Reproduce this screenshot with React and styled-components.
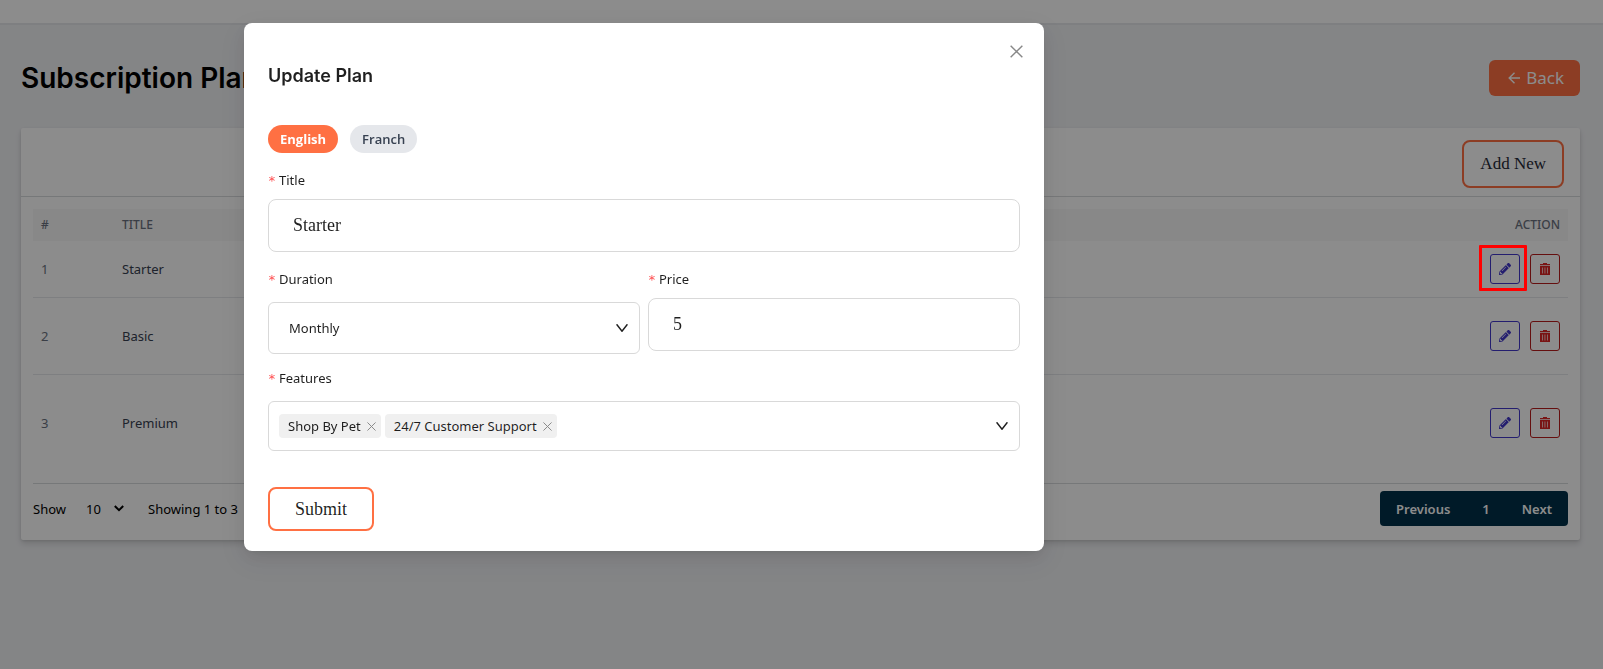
import { useState } from "react";
import { FaPencilAlt } from "react-icons/fa";
import styled, { createGlobalStyle } from "styled-components";

const sans = `"Noto Sans", "Open Sans", sans-serif`;
const serif = `"Liberation Serif", serif`;

const plans = [
    { id: 1, title: "Starter", height: 57, active: true },
    { id: 2, title: "Basic", height: 77 },
    { id: 3, title: "Premium", height: 96 },
];

function TrashIcon() {
    return (
        <svg width="12" height="14" viewBox="0 0 12 14" fill="currentColor" aria-hidden="true">
            <path d="M4 1h4v1h3v1H1V2h3z" />
            <path fillRule="evenodd" d="M1 3.8h10V13H1zM3.2 5.5v6h.7v-6zM5.6 5.5v6h.7v-6zM8 5.5v6h.7v-6z" />
        </svg>
    );
}

function ArrowIcon() {
    return (
        <svg width="12" height="12" viewBox="0 0 12 12" fill="none" stroke="currentColor" strokeWidth="1.4" aria-hidden="true">
            <path d="M6.5 .8 1.2 6l5.3 5.2M1.2 6H12" />
        </svg>
    );
}

function CrossIcon({ size, stroke = 1 }) {
    return (
        <svg width={size} height={size} viewBox="0 0 12 12" fill="none" stroke="currentColor" strokeWidth={stroke} aria-hidden="true">
            <path d="M.6 .6 11.4 11.4M11.4 .6 .6 11.4" />
        </svg>
    );
}

function ChevronIcon() {
    return (
        <svg width="12" height="8" viewBox="0 0 12 8" fill="none" stroke="currentColor" strokeWidth="1.5" aria-hidden="true">
            <path d="M.6 .3 6 7.2 11.4 .3" />
        </svg>
    );
}

export default function App() {
    const [language, setLanguage] = useState("English");
    const [features, setFeatures] = useState(["Shop By Pet", "24/7 Customer Support"]);

    return (
        <>
            <GlobalStyle />
            <Page>
                <TopBar />
                <Main>
                    <PageHeader>
                        <PageTitle>Subscription Plans</PageTitle>
                        <BackButton type="button"><ArrowIcon />Back</BackButton>
                    </PageHeader>
                    <Card>
                        <CardHeader>
                            <AddButton type="button">Add New</AddButton>
                        </CardHeader>
                        <CardBody>
                            <Table>
                                <thead>
                                    <tr>
                                        <HeadCell $index>#</HeadCell>
                                        <HeadCell>TITLE</HeadCell>
                                        <HeadCell $right>ACTION</HeadCell>
                                    </tr>
                                </thead>
                                <tbody>
                                    {plans.map((plan) => (
                                        <Row key={plan.id} $height={plan.height}>
                                            <Cell $muted>{plan.id}</Cell>
                                            <Cell>{plan.title}</Cell>
                                            <Cell>
                                                <Actions>
                                                    <ActionButton type="button" aria-label={`Edit ${plan.title}`} $border="#4338ca" $icon="#4338ca">
                                                        <FaPencilAlt size={12} />
                                                        {plan.active && <Highlight />}
                                                    </ActionButton>
                                                    <ActionButton type="button" aria-label={`Delete ${plan.title}`} $border="#b91c1c" $icon="#dc2626">
                                                        <TrashIcon />
                                                    </ActionButton>
                                                </Actions>
                                            </Cell>
                                        </Row>
                                    ))}
                                </tbody>
                            </Table>
                            <TableFooter>
                                <PageSize>
                                    <label htmlFor="page-size">Show</label>
                                    <SizeSelectWrap>
                                        <SizeSelect id="page-size" defaultValue="10">
                                            <option>10</option>
                                            <option>20</option>
                                        </SizeSelect>
                                        <svg width="10" height="7" viewBox="0 0 10 7" fill="none" stroke="currentColor" strokeWidth="2" aria-hidden="true">
                                            <path d="M.8 1 5 5.2 9.2 1" />
                                        </svg>
                                    </SizeSelectWrap>
                                    <span>Showing 1 to 3</span>
                                </PageSize>
                                <Pagination>
                                    <PageButton type="button">Previous</PageButton>
                                    <PageButton type="button">1</PageButton>
                                    <PageButton type="button">Next</PageButton>
                                </Pagination>
                            </TableFooter>
                        </CardBody>
                    </Card>
                </Main>
            </Page>

            <Overlay>
                <Modal role="dialog" aria-labelledby="modal-title">
                    <CloseButton type="button" aria-label="Close"><CrossIcon size={13} stroke={1.3} /></CloseButton>
                    <ModalTitle id="modal-title">Update Plan</ModalTitle>
                    <Tabs>
                        {["English", "Franch"].map((name) => (
                            <Tab key={name} type="button" $active={name === language} onClick={() => setLanguage(name)}>
                                {name}
                            </Tab>
                        ))}
                    </Tabs>
                    <Form onSubmit={(e) => e.preventDefault()}>
                        <Field>
                            <Label htmlFor="title">Title</Label>
                            <TextInput id="title" defaultValue="Starter" />
                        </Field>
                        <FieldRow>
                            <Field $loose>
                                <Label htmlFor="duration">Duration</Label>
                                <SelectBox>
                                    <Select id="duration" defaultValue="Monthly">
                                        <option>Monthly</option>
                                        <option>Yearly</option>
                                    </Select>
                                    <ChevronIcon />
                                </SelectBox>
                            </Field>
                            <Field>
                                <Label htmlFor="price">Price</Label>
                                <TextInput id="price" defaultValue="5" />
                            </Field>
                        </FieldRow>
                        <Field $loose>
                            <Label htmlFor="features">Features</Label>
                            <TagBox>
                                {features.map((name) => (
                                    <Tag key={name}>
                                        {name}
                                        <TagRemove
                                            type="button"
                                            aria-label={`Remove ${name}`}
                                            onClick={() => setFeatures(features.filter((el) => el !== name))}
                                        >
                                            <CrossIcon size={9} stroke={1.3} />
                                        </TagRemove>
                                    </Tag>
                                ))}
                                <TagInput id="features" />
                                <ChevronIcon />
                            </TagBox>
                        </Field>
                        <SubmitButton type="submit">Submit</SubmitButton>
                    </Form>
                </Modal>
            </Overlay>
        </>
    );
}

const GlobalStyle = createGlobalStyle`
    * {
        box-sizing: border-box;
    }
    body {
        margin: 0;
        font-family: ${sans};
        font-size: 13px;
        line-height: 20px;
        color: #000;
    }
    button, input, select {
        margin: 0;
        font: inherit;
        color: inherit;
    }
    button {
        cursor: pointer;
    }
`;

const Page = styled.div`
    min-height: 100vh;
    background: #f1f2f5;
`;

const TopBar = styled.header`
    height: 25px;
    background: #fff;
    border-bottom: 2px solid #e5e7eb;
`;

const Main = styled.main`
    padding: 35px 23px 0 21px;
`;

const PageHeader = styled.div`
    display: flex;
    align-items: center;
    justify-content: space-between;
    margin-bottom: 32px;
`;

const PageTitle = styled.h1`
    margin: 0;
    font: 600 28px/36px Inter, sans-serif;
`;

const BackButton = styled.button`
    display: flex;
    align-items: center;
    gap: 6px;
    height: 36px;
    padding: 0 16px 0 19px;
    border: 0;
    border-radius: 6px;
    background: #ff7043;
    color: #fff;
    font-size: 17px;
`;

const Card = styled.section`
    border-radius: 2px;
    background: #fff;
    box-shadow: 0 4px 6px rgba(0, 0, 0, 0.12), 0 1px 3px rgba(0, 0, 0, 0.1);
`;

const CardHeader = styled.div`
    display: flex;
    justify-content: flex-end;
    padding: 12px 16px 8px;
    border-bottom: 1px solid #d8dadd;
`;

const AddButton = styled.button`
    height: 48px;
    padding: 0 16px;
    border: 2px solid #ff7043;
    border-radius: 8px;
    background: none;
    color: #1f2937;
    font: 17px ${serif};
`;

const CardBody = styled.div`
    padding: 12px 12px 14px;
`;

const Table = styled.table`
    width: 100%;
    border-spacing: 0;
`;

const HeadCell = styled.th`
    width: ${(props) => (props.$index ? "81px" : "auto")};
    height: 32px;
    padding: 0 8px;
    background: #f7f7f7;
    color: #6b7280;
    font-size: 12px;
    font-weight: 500;
    text-align: ${(props) => (props.$right ? "right" : "left")};
`;

const Row = styled.tr`
    height: ${(props) => props.$height}px;
`;

const Cell = styled.td`
    padding: 0 8px;
    border-bottom: 1px solid #e5e7eb;
    color: ${(props) => (props.$muted ? "#6b7280" : "#374151")};

    tr:last-child > & {
        border-bottom: 0;
    }
`;

const Actions = styled.div`
    display: flex;
    justify-content: flex-end;
    gap: 10px;
`;

const ActionButton = styled.button`
    position: relative;
    display: grid;
    place-items: center;
    width: 30px;
    height: 30px;
    padding: 0;
    border: 1px solid ${(props) => props.$border};
    border-radius: 3px;
    background: none;
    color: ${(props) => props.$icon};
`;

const Highlight = styled.span`
    position: absolute;
    inset: -10px -8px -8px -12px;
    z-index: 20;
    border: 3px solid #f00;
    border-radius: 1px;
`;

const TableFooter = styled.div`
    display: flex;
    align-items: center;
    justify-content: space-between;
    margin-top: 12px;
    padding-top: 7px;
    border-top: 1px solid #d8dadd;
`;

const PageSize = styled.div`
    display: flex;
    align-items: center;
    gap: 20px;
`;

const SizeSelectWrap = styled.div`
    display: flex;
    align-items: center;
    margin-right: 4px;
`;

const SizeSelect = styled.select`
    width: 28px;
    padding: 0;
    border: 0;
    background: none;
    appearance: none;
`;

const Pagination = styled.nav`
    display: flex;
    border-radius: 4px;
    background: #003049;
`;

const PageButton = styled.button`
    height: 35px;
    padding: 0 16px;
    border: 0;
    background: none;
    color: #fff;
    font-weight: 600;
`;

const Overlay = styled.div`
    position: fixed;
    inset: 0;
    z-index: 10;
    display: flex;
    align-items: flex-start;
    padding: 23px 244px;
    background: rgba(0, 0, 0, 0.45);
`;

const Modal = styled.div`
    position: relative;
    width: 100%;
    max-width: 800px;
    padding: 41px 24px 20px;
    border-radius: 8px;
    background: #fff;
    color: rgba(0, 0, 0, 0.88);
    box-shadow: 0 6px 16px rgba(0, 0, 0, 0.08), 0 3px 6px -4px rgba(0, 0, 0, 0.12), 0 9px 28px 8px rgba(0, 0, 0, 0.05);
`;

const CloseButton = styled.button`
    position: absolute;
    top: 17px;
    right: 17px;
    display: grid;
    place-items: center;
    width: 22px;
    height: 22px;
    padding: 0;
    border: 0;
    background: none;
    color: #888;
`;

const ModalTitle = styled.h2`
    margin: 0 0 37px;
    font: 600 18px/24px Inter, sans-serif;
`;

const Tabs = styled.div`
    display: flex;
    gap: 12px;
    margin-bottom: 16px;
`;

const Tab = styled.button`
    height: 28px;
    padding: 0 12px;
    border: 0;
    border-radius: 14px;
    background: ${(props) => (props.$active ? "#ff7043" : "#e5e7eb")};
    color: ${(props) => (props.$active ? "#fff" : "#374151")};
    font-family: "Open Sans", sans-serif;
    font-weight: ${(props) => (props.$active ? 700 : 600)};
`;

const Form = styled.form`
    display: flex;
    flex-direction: column;
`;

const Field = styled.div`
    display: flex;
    flex: 1;
    flex-direction: column;
    gap: ${(props) => (props.$loose ? "12px" : "8px")};
    min-width: 0;
`;

const FieldRow = styled.div`
    display: flex;
    align-items: flex-start;
    gap: 8px;
    margin: 16px 0 13px;
`;

const Label = styled.label`
    line-height: 22px;

    &::before {
        content: "*";
        display: inline-block;
        width: 11px;
        color: #ff4d4f;
        font-family: "DejaVu Sans Mono", monospace;
        line-height: 1;
    }
`;

const TextInput = styled.input`
    width: 100%;
    height: 53px;
    padding: 0 24px;
    border: 1px solid #d9d9d9;
    border-radius: 8px;
    font: 18px ${serif};
`;

const SelectBox = styled.div`
    display: flex;
    align-items: center;
    height: 52px;
    padding: 0 11px 0 20px;
    border: 1px solid #d9d9d9;
    border-radius: 6px;
`;

const Select = styled.select`
    flex: 1;
    padding: 0;
    border: 0;
    background: none;
    appearance: none;
`;

const TagBox = styled.div`
    display: flex;
    align-items: center;
    gap: 4px;
    height: 50px;
    padding: 0 11px 0 10px;
    border: 1px solid #d9d9d9;
    border-radius: 6px;
`;

const Tag = styled.span`
    display: flex;
    align-items: center;
    gap: 6px;
    height: 24px;
    padding: 0 5px 0 9px;
    border-radius: 4px;
    background: #f0f0f0;
`;

const TagRemove = styled.button`
    display: flex;
    padding: 0;
    border: 0;
    background: none;
    color: #888;
`;

const TagInput = styled.input`
    flex: 1;
    min-width: 0;
    border: 0;
    outline: 0;
    background: none;
`;

const SubmitButton = styled.button`
    align-self: flex-start;
    height: 44px;
    margin-top: 36px;
    padding: 0 25px;
    border: 2px solid #ff7043;
    border-radius: 8px;
    background: #fff;
    font: 18px ${serif};
`;
